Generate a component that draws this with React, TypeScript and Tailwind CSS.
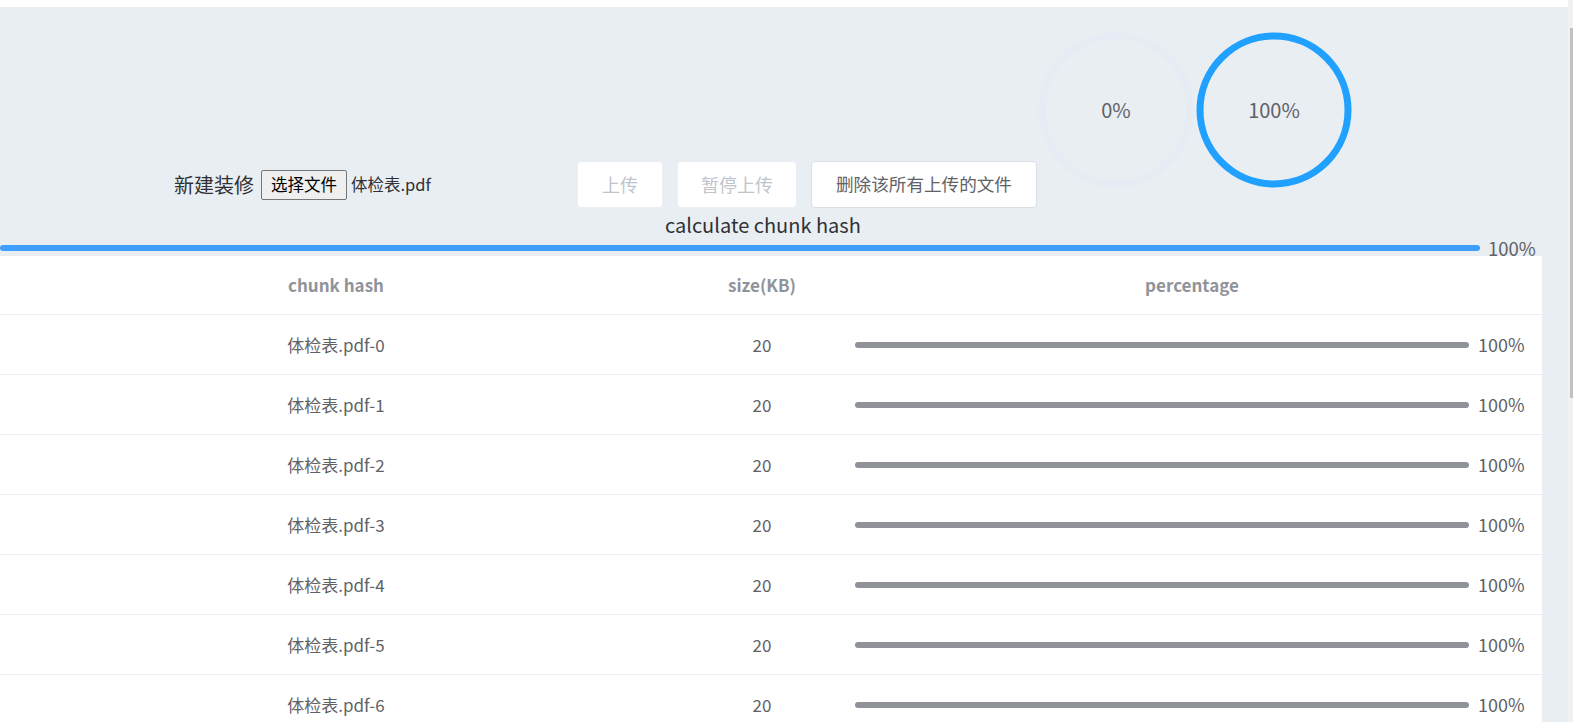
import React from 'react';

const FONT = { fontFamily: '"Noto Sans CJK SC", "Noto Sans", sans-serif' };

const chunks = [0, 1, 2, 3, 4, 5, 6, 7].map((i) => ({
  hash: `体检表.pdf-${i}`,
  size: 20,
  percentage: 100,
}));

const Ring: React.FC<{ value: number }> = ({ value }) => {
  const r = 74;
  const len = 2 * Math.PI * r;
  return (
    <div className="relative w-[156px] h-[156px]">
      <svg width="156" height="156" viewBox="0 0 156 156" className="-rotate-90">
        <circle cx="78" cy="78" r={r} fill="none" stroke="#e6ebf4" strokeWidth="7" />
        {value > 0 && (
          <circle
            cx="78"
            cy="78"
            r={r}
            fill="none"
            stroke="#20a0ff"
            strokeWidth="7"
            strokeLinecap="round"
            strokeDasharray={`${(len * value) / 100} ${len}`}
          />
        )}
      </svg>
      <div className="absolute inset-0 flex items-center justify-center text-[20px] text-[#606266]">
        {value}%
      </div>
    </div>
  );
};

export default function App() {
  return (
    <div className="h-screen overflow-hidden flex bg-white" style={FONT}>
      <div className="flex-1 flex flex-col">
        <div className="h-[7px] bg-white" />
        <div className="flex-1 bg-[#e9eef3] overflow-hidden">
          <div className="flex items-start">
            <div className="ml-[174px] mt-[154px] flex items-center h-[47px]">
              <span className="w-[80px] text-[20px] text-[#303133]">新建装修</span>
              <button className="ml-[7px] w-[86px] h-[30px] border border-[#767676] rounded-[2px] bg-[#efefef] text-[16.5px] text-black leading-none">
                选择文件
              </button>
              <span className="ml-[4px] w-[80px] text-[16.5px] text-[#303133]">体检表.pdf</span>
              <div className="ml-[146px] flex items-center gap-[14px]">
                <button className="w-[86px] h-[47px] bg-white border border-[#ebeef5] rounded text-[18px] text-[#c0c4cc]">
                  上传
                </button>
                <button className="w-[120px] h-[47px] bg-white border border-[#ebeef5] rounded text-[18px] text-[#c0c4cc]">
                  暂停上传
                </button>
                <button className="w-[226px] h-[47px] bg-white border border-[#dcdfe6] rounded text-[17.6px] text-[#606266]">
                  删除该所有上传的文件
                </button>
              </div>
            </div>
            <div className="mt-[25px] ml-[1px] flex gap-[2px]">
              <Ring value={0} />
              <Ring value={100} />
            </div>
          </div>
          <div className="ml-[665px] mt-[2px] h-[30px] text-[20px] text-[#303133] leading-[30px]">
            calculate chunk hash
          </div>
          <div className="h-[16px] flex items-center overflow-hidden">
            <div className="w-[1480px] h-[6px] rounded-full bg-[#409eff]" />
            <span className="ml-[8px] text-[18.5px] text-[#606266] leading-none">100%</span>
          </div>

          <div className="w-[1542px] bg-white">
            <div className="flex h-[59px] border-b border-[#ebeef5] text-[17px] font-bold text-[#909399]">
              <div className="w-[672px] flex items-center justify-center">chunk hash</div>
              <div className="w-[180px] flex items-center justify-center">size(KB)</div>
              <div className="flex-1 flex items-center justify-center pr-[10px]">percentage</div>
            </div>
            {chunks.map((c) => (
              <div key={c.hash} className="flex h-[60px] border-b border-[#ebeef5] text-[17px] text-[#606266]">
                <div className="w-[672px] flex items-center justify-center">{c.hash}</div>
                <div className="w-[180px] flex items-center justify-center">{c.size}</div>
                <div className="flex-1 flex items-center pl-[3px] pr-[7px]">
                  <div className="flex-1 h-[6px] rounded-full bg-[#8f9299]" />
                  <span className="ml-[9px] w-[57px] text-[18px]">{c.percentage}%</span>
                </div>
              </div>
            ))}
          </div>
        </div>
      </div>
      <div className="w-[5px] bg-[#f1f1f1] flex flex-col">
        <div className="h-[28px]" />
        <div className="h-[370px] ml-[2px] bg-[#c1c1c1]" />
      </div>
    </div>
  );
}
